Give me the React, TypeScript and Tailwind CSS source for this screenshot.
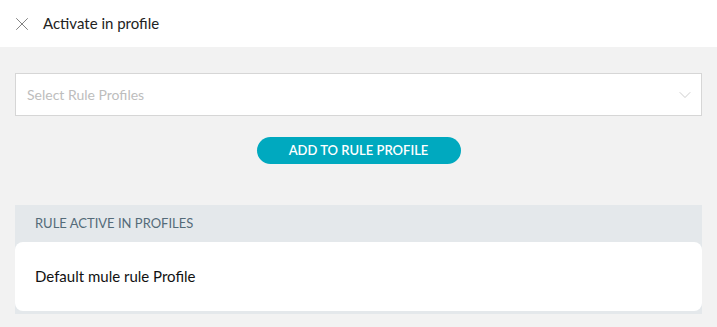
import { X, ChevronDown } from 'lucide-react'

export default function App() {
  return (
    <div className="h-[327px] w-[717px] bg-[#f2f2f2] font-['Lato',sans-serif]">
      <div className="flex h-[47px] items-center gap-[10px] bg-white pl-[11px]">
        <X className="h-[22px] w-[22px] text-[#777]" strokeWidth={1} />
        <span className="text-[15px] text-[#222]">Activate in profile</span>
      </div>

      <div className="px-[15px] pt-[26px]">
        <div className="flex h-[43px] items-center justify-between border border-[#d6d6d6] bg-white pl-[11px] pr-[6px]">
          <span className="text-[14px] text-[#bdbdbd]">Select Rule Profiles</span>
          <ChevronDown className="h-[20px] w-[20px] text-[#c4c4c4]" strokeWidth={1} />
        </div>

        <div className="mt-[21px] flex justify-center">
          <button className="h-[27px] w-[204px] rounded-full bg-[#00a9bf] text-[13px] font-semibold text-white">
            ADD TO RULE PROFILE
          </button>
        </div>

        <div className="mt-[41px] bg-[#e4e8eb] pb-[3px]">
          <div className="flex h-[37px] items-center pl-[20px] text-[13px] text-[#546b79]">
            RULE ACTIVE IN PROFILES
          </div>
          <div className="flex h-[69px] items-center rounded-lg bg-white pl-[20px] text-[15px] text-[#111]">
            Default mule rule Profile
          </div>
        </div>
      </div>
    </div>
  )
}
